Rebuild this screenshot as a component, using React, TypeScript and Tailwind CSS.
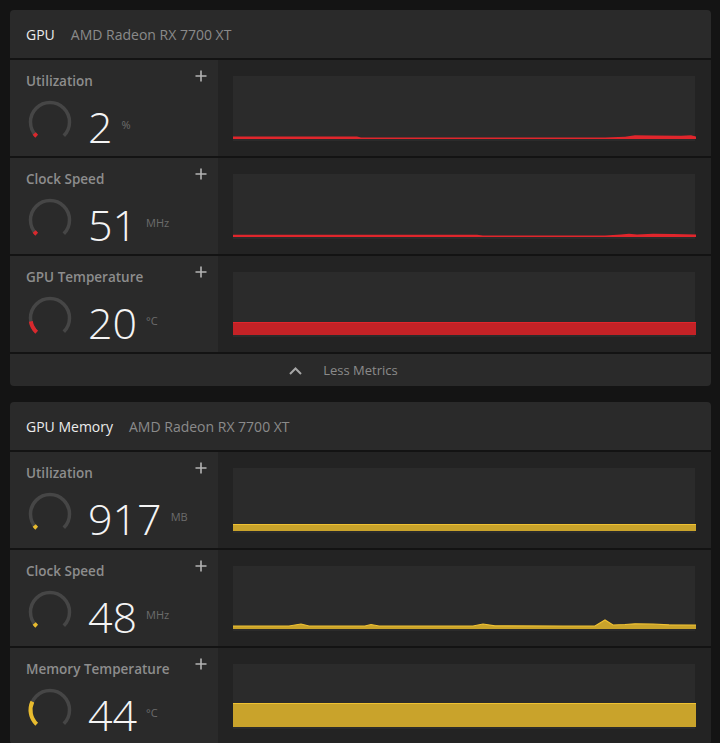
import React from 'react'

type Pt = [number, number]

const W = 463
const H = 65
const BASE = 63

const RED = { line: '#e0262c', fill: '#c42226', dot: '#d8282d' }
const YELLOW = { line: '#f0c232', fill: '#c9a32b', dot: '#e8bb2e' }

function topLine(pts: Pt[]) {
  return pts.map(([x, h], i) => `${i ? 'L' : 'M'}${x} ${BASE - h}`).join(' ')
}

function areaPath(pts: Pt[]) {
  const last = pts[pts.length - 1][0]
  return `${topLine(pts)} L${last} ${BASE} L${pts[0][0]} ${BASE} Z`
}

function Chart({ pts, color, solid }: { pts: Pt[]; color: typeof RED; solid?: boolean }) {
  return (
    <svg width={W} height={H} viewBox={`0 0 ${W} ${H}`} className="block">
      <path d={areaPath(pts)} fill={solid ? color.fill : color.line} />
      {solid && <path d={topLine(pts)} stroke={color.line} strokeWidth={1.2} fill="none" />}
    </svg>
  )
}

// 270 degree ring, open at the bottom, filled clockwise from bottom-left
function Gauge({ frac, color }: { frac: number; color: string }) {
  const r = 19.5
  const c = 24
  const pt = (deg: number) => {
    const a = (deg * Math.PI) / 180
    return [c + r * Math.cos(a), c + r * Math.sin(a)]
  }
  const arc = (a0: number, a1: number) => {
    const [x0, y0] = pt(a0)
    const [x1, y1] = pt(a1)
    const large = a1 - a0 > 180 ? 1 : 0
    return `M${x0.toFixed(2)} ${y0.toFixed(2)} A${r} ${r} 0 ${large} 1 ${x1.toFixed(2)} ${y1.toFixed(2)}`
  }
  const end = 135 + Math.max(frac * 270, 9)
  return (
    <svg width={48} height={48} viewBox="0 0 48 48" className="block shrink-0">
      <path d={arc(135, 405)} stroke="#464646" strokeWidth={3.5} fill="none" />
      <path d={arc(133, end)} stroke={color} strokeWidth={4} fill="none" />
    </svg>
  )
}

function Plus() {
  return (
    <svg width={12} height={12} viewBox="0 0 12 12" className="mt-[-2px] block">
      <path d="M6 0.5V11.5M0.5 6H11.5" stroke="#b4b4b4" strokeWidth={1.6} />
    </svg>
  )
}

type Metric = {
  label: string
  value: string
  unit: string
  frac: number
  pts: Pt[]
  solid?: boolean
}

function Row({ m, color }: { m: Metric; color: typeof RED }) {
  return (
    <div className="flex h-[98px] border-t-2 border-[#131313]">
      <div className="w-[208px] shrink-0 bg-[#2a2a2a] pl-4 pr-[11px] pt-[12px]">
        <div className="flex items-start justify-between">
          <span className="text-[13.5px] leading-[18px] font-semibold text-[#8d8d8d]">{m.label}</span>
          <Plus />
        </div>
        <div className="mt-[8px] flex items-start">
          <Gauge frac={m.frac} color={color.dot} />
          <span className="ml-[14px] mt-[7px] text-[43px] leading-none font-light text-[#f4f4f4]">{m.value}</span>
          <span className="ml-[9px] mt-[21px] text-[11px] leading-none text-[#6c6c6c]">{m.unit}</span>
        </div>
      </div>
      <div className="flex-1 bg-[#232323] pl-[15px] pt-[16px]">
        <div className="w-[462px] bg-[#2b2b2b]">
          <Chart pts={m.pts} color={color} solid={m.solid} />
        </div>
      </div>
    </div>
  )
}

function Card({
  title,
  metrics,
  color,
  footer,
}: {
  title: string
  metrics: Metric[]
  color: typeof RED
  footer?: boolean
}) {
  return (
    <div className="w-[701px] overflow-hidden rounded-[4px] bg-[#2a2a2a]">
      <div className="flex h-[48px] items-center gap-4 px-4 text-[14px]">
        <span className="font-medium text-[#ececec]">{title}</span>
        <span className="text-[#8a8a8a]">AMD Radeon RX 7700 XT</span>
      </div>
      {metrics.map(m => (
        <Row key={m.label} m={m} color={color} />
      ))}
      {footer && (
        <div className="flex h-[34px] items-center justify-center border-t-2 border-[#131313] pt-[2px]">
          <span className="relative text-[13px] text-[#8a8a8a]">
            <svg width={13} height={8} viewBox="0 0 13 8" className="absolute right-full top-[6px] mr-[21px] block">
              <path d="M1 7L6.5 1.5L12 7" stroke="#a6a6a6" strokeWidth={2} fill="none" />
            </svg>
            Less Metrics
          </span>
        </div>
      )}
    </div>
  )
}

const gpu: Metric[] = [
  {
    label: 'Utilization',
    value: '2',
    unit: '%',
    frac: 0.02,
    pts: [[0, 2.4], [124, 2.4], [128, 1.6], [372, 1.6], [392, 2.2], [402, 3.8], [420, 3.6], [448, 3.2], [458, 3.8], [463, 2.4]],
  },
  {
    label: 'Clock Speed',
    value: '51',
    unit: 'MHz',
    frac: 0.02,
    pts: [[0, 2.2], [244, 2.2], [250, 1.6], [372, 1.6], [388, 2.6], [396, 3.2], [404, 2.6], [420, 3.2], [440, 3.0], [463, 2.4]],
  },
  {
    label: 'GPU Temperature',
    value: '20',
    unit: '°C',
    frac: 0.13,
    solid: true,
    pts: [[0, 12.5], [463, 12.5]],
  },
]

const mem: Metric[] = [
  {
    label: 'Utilization',
    value: '917',
    unit: 'MB',
    frac: 0.02,
    solid: true,
    pts: [[0, 6.5], [463, 6.5]],
  },
  {
    label: 'Clock Speed',
    value: '48',
    unit: 'MHz',
    frac: 0.02,
    solid: true,
    pts: [
      [0, 3], [56, 3], [68, 5], [76, 3], [132, 3], [138, 4.5], [146, 3], [240, 3], [250, 5], [262, 3.2],
      [330, 3], [362, 3], [372, 9], [380, 4], [392, 4.5], [402, 5.2], [420, 5], [436, 4.2], [463, 4],
    ],
  },
  {
    label: 'Memory Temperature',
    value: '44',
    unit: '°C',
    frac: 0.26,
    solid: true,
    pts: [[0, 23.5], [463, 23.5]],
  },
]

export default function App() {
  return (
    <div
      className="min-h-screen bg-[#141414] pl-[10px] pt-[10px]"
      style={{ fontFamily: '"Open Sans", "Noto Sans", sans-serif' }}
    >
      <div className="flex flex-col gap-4">
        <Card title="GPU" metrics={gpu} color={RED} footer />
        <Card title="GPU Memory" metrics={mem} color={YELLOW} />
      </div>
    </div>
  )
}
